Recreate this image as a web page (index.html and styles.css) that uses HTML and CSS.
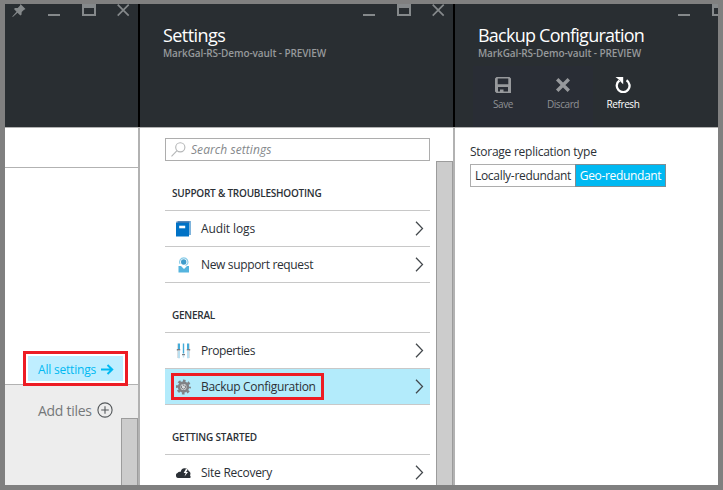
FILE: index.html
```
<!DOCTYPE html>
<html lang="en">
<head>
<meta charset="utf-8">
<title>Backup Configuration</title>
<link rel="stylesheet" href="styles.css">
</head>
<body>
<svg class="defs" width="0" height="0">
  <symbol id="controls" viewBox="0 0 82 13">
    <path d="M0 10h12v2H0z"/>
    <path fill-rule="evenodd" d="M34 0h14v12H34zM36 4v6h10V4z"/>
    <path d="M69.700 .7l11 11M80.700 .7l-11 11" fill="none" stroke="#85898b" stroke-width="1.700"/>
  </symbol>
  <symbol id="chevron" viewBox="0 0 9 15">
    <path d="M1 .8L7.500 7.500 1 14.200" fill="none" stroke="#43484c" stroke-width="1.250"/>
  </symbol>
</svg>
<div class="desktop">
  <section class="blade overview">
    <header class="head">
      <svg class="pin" viewBox="0 0 14 14"><path d="M8.500 0L13.500 5 11.800 5.900 9.700 8.100 9.500 10.700 8.300 11.500 5.500 8.700.8 13 .3 12.500 4.500 7.700 2 5.100 3 4.100 5.700 4 7.900 1.800z"/></svg>
      <svg class="controls"><use href="#controls"/></svg>
    </header>
    <div class="strip"></div>
    <div class="lens">
      <a class="all-settings"><span class="t-all">All settings</span>
        <svg width="13" height="11" viewBox="0 0 13 11"><path d="M0 5.500h11M6.500 1l4.700 4.500L6.500 10" fill="none" stroke="#00b9f2" stroke-width="2"/></svg>
      </a>
    </div>
    <div class="tiles">
      <div class="add"><span class="t-add">Add tiles</span>
        <svg width="16" height="16" viewBox="0 0 16 16"><g fill="none" stroke="#55595c" stroke-width="1.100"><circle cx="8" cy="8" r="7.100"/><path d="M8 4.200v7.600M4.200 8h7.600"/></g></svg>
      </div>
      <div class="scroll"></div>
    </div>
  </section>

  <section class="blade settings">
    <header class="head">
      <svg class="controls"><use href="#controls"/></svg>
      <h1 class="t-settings">Settings</h1>
      <p class="sub">MarkGal-RS-Demo-vault - PREVIEW</p>
    </header>
    <div class="content">
      <div class="list">
        <div class="search">
          <svg width="15" height="15" viewBox="0 0 15 15"><g fill="none" stroke="#b4b6b7" stroke-width="1.100"><circle cx="9.300" cy="5.300" r="4.600"/><path d="M6 8.700L.5 14.300"/></g></svg>
          <span>Search settings</span>
        </div>
        <h2 class="t-support">SUPPORT &amp; TROUBLESHOOTING</h2>
        <div class="row">
          <svg class="icon" viewBox="0 0 16 16"><path d="M2 0h13v14H2z" fill="#7fb4dc"/><path d="M0 1.500h13V15.500H0z" fill="#0072c6"/><path d="M.5 1h13" stroke="#2d5f9b"/><path d="M3.200 4.700h6v2.600h-6z" fill="#fff"/></svg>
          <span class="t-audit">Audit logs</span><svg class="chev"><use href="#chevron"/></svg>
        </div>
        <div class="row">
          <svg class="icon" viewBox="0 0 16 16"><path d="M2.500 9h2.500l3 3 3-3h2V15.500H2.500z" fill="#55b4de"/><circle cx="7.700" cy="5" r="2.700" fill="#3f9ccb"/><path d="M4 7A4.200 4.200 0 1 1 11.500 7L9.500 8.500" fill="none" stroke="#8acde9" stroke-width="1.100"/></svg>
          <span class="t-request">New support request</span><svg class="chev"><use href="#chevron"/></svg>
        </div>
        <h2 class="t-general">GENERAL</h2>
        <div class="row">
          <svg class="icon" viewBox="0 0 16 16"><path d="M2 .5h2v5.500H2zM11 .5h2v5.500h-2zM6.800 .5h1.400v10H6.800z" fill="#44acd9"/><path d="M2 8h2v7.300H2zM11 8h2v7.300h-2zM6.800 12.500h1.400v2H6.800z" fill="#b9dff0"/><path d="M1 .5h1v14.500H1zM13 .5h1v14.500h-1z" fill="#dce0e2"/><path d="M.8 6h3.400v1.500H.8zM10.800 6h3.400v1.500h-3.400zM6 11h3v1.200H6z" fill="#778087"/></svg>
          <span class="t-prop">Properties</span><svg class="chev"><use href="#chevron"/></svg>
        </div>
        <div class="row selected">
          <svg class="icon" viewBox="0 0 16 16"><circle cx="7.500" cy="8" r="6.300" fill="none" stroke="#808285" stroke-width="2.400" stroke-dasharray="2.600 2.348" stroke-dashoffset="1.300"/><circle cx="7.500" cy="8" r="4.400" fill="#d9dcdd" stroke="#808285" stroke-width="2.600"/><path d="M5.800 6.500A2.200 2.200 0 1 0 9.300 6.600M7 5.300l1.300 2" fill="none" stroke="#77797c" stroke-width="1"/></svg>
          <span class="t-backup">Backup Configuration</span><svg class="chev"><use href="#chevron"/></svg>
          <i class="callout"></i>
        </div>
        <h2 class="t-started">GETTING STARTED</h2>
        <div class="row">
          <svg class="icon" viewBox="0 0 16 16"><path d="M2.500 13A2.600 2.600 0 0 1 1.500 8 3 3 0 0 1 4.700 6.800 4.200 4.200 0 0 1 8.500 3.200 4.200 4.200 0 0 1 12.700 6 3 3 0 0 1 14 10.300 2.500 2.500 0 0 1 14.300 13z" fill="#2b3036"/><path d="M10 3.700L7.700 8h2l-1.200 3.400 3.500-4.400h-2l1.800-2.600z" fill="#fff"/></svg>
          <span class="t-site">Site Recovery</span><svg class="chev"><use href="#chevron"/></svg>
        </div>
      </div>
      <div class="scroll"></div>
    </div>
  </section>

  <section class="blade backup">
    <header class="head">
      <svg class="controls"><use href="#controls"/></svg>
      <h1 class="t-title">Backup Configuration</h1>
      <p class="sub">MarkGal-RS-Demo-vault - PREVIEW</p>
      <div class="commands">
        <div class="cmd off"><svg width="16" height="16" viewBox="0 0 16 16"><path fill="#97999c" fill-rule="evenodd" d="M1.500 0h13L16 1.500V16H1.500L0 14.500V1.500zM2.700 1.600V7.300h10.600V1.600zM3 10V14.500h2V12.500h3.500v2h4.500V10z"/><path d="M5 13h3v3H5z" fill="#97999c"/></svg><span>Save</span></div>
        <div class="cmd off"><svg width="16" height="16" viewBox="0 0 16 16"><path d="M2.200 2.200l11.600 11.600M13.800 2.200L2.200 13.800" stroke="#97999c" stroke-width="3.400"/></svg><span>Discard</span></div>
        <div class="cmd"><svg width="16" height="16" viewBox="0 0 16 16"><path d="M4.500 3.500A6.400 6.400 0 1 0 11.500 3.300" fill="none" stroke="#fff" stroke-width="2.300"/><path d="M.5 0h7.700v7.300L5.600 4.700 5 3.500z" fill="#fff"/></svg><span>Refresh</span></div>
      </div>
    </header>
    <div class="form">
      <label>Storage replication type</label>
      <div class="options"><span class="opt local">Locally-redundant</span><span class="opt geo">Geo-redundant</span></div>
    </div>
  </section>
</div>
</body>
</html>
```
FILE: styles.css
```
* { box-sizing: border-box; }
html, body { height: 100%; }
body {
  margin: 0;
  padding: 4px 5px 5px;
  background: #808080;
  font: 12px/16px "Open Sans", "Noto Sans", sans-serif;
  color: #2b3036;
  overflow: hidden;
}
svg { display: block; flex: none; }
h1, h2, p { margin: 0; }
.defs { position: absolute; }
.desktop { display: flex; height: 481px; }
.blade { display: flex; flex-direction: column; background: #fff; overflow: hidden; }
.overview { width: 133px; }
.settings { width: 315px; }
.backup { width: 265px; }
.head {
  position: relative;
  flex: none;
  height: 124px;
  background: linear-gradient(#292e32, #292e32) padding-box;
  border-bottom: 1px solid #b2b2b2;
}
.settings .head::before, .backup .head::before { content: ""; position: absolute; left: 0; top: 0; width: 2px; height: 123px; background: #000; }
.content, .form { border-left: 2px solid #b2b2b2; }
.controls { position: absolute; top: 0; left: 43px; width: 82px; height: 13px; fill: #85898b; }
.settings .controls, .backup .controls { left: 225px; }
.pin { position: absolute; left: 7px; top: 0; width: 14px; height: 14px; fill: #85898b; }

h1 { padding: 19px 0 0 25px; font-size: 18px; line-height: 24px; font-weight: 400; color: #fff; white-space: nowrap; }
.sub { padding-left: 25px; font-size: 10px; line-height: 13px; font-weight: 600; letter-spacing: -.1px; color: #96999b; white-space: nowrap; }
.t-settings { letter-spacing: -.57px; }
.t-title { letter-spacing: -.76px; }

.strip { height: 40px; border-bottom: 1px solid #b2b2b2; }
.lens { flex: none; height: 217px; padding: 183px 0 0 18px; border-bottom: 1px solid #b2b2b2; }
.all-settings {
  position: relative;
  display: flex;
  align-items: center;
  gap: 5px;
  width: 105px;
  height: 35px;
  padding: 2px 5px 0 12px;
  border: 3px solid #ed1c24;
  background: #bfeeff;
  box-shadow: inset 0 0 0 2px #fff;
  color: #00b9f2;
}
.t-all { letter-spacing: -.2px; white-space: nowrap; }
.tiles { flex: 1; display: flex; justify-content: space-between; background: #ededed; }
.add { display: flex; gap: 5px; height: 16px; margin: 17px 0 0 33px; font-size: 14px; line-height: 17px; color: #75787a; white-space: nowrap; }
.t-add { letter-spacing: -.28px; }
.scroll { width: 17px; margin-top: 33px; background: #ccc; border: solid #9c9c9c; border-width: 1px 1px 0; }

.content { flex: 1; display: flex; justify-content: space-between; padding-left: 25px; }
.list { width: 265px; }
.search {
  display: flex;
  gap: 5px;
  height: 23px;
  margin-top: 10px;
  padding: 3px 0 0 5px;
  border: 1px solid #adadad;
  font-style: italic;
  letter-spacing: .07px;
  color: #85888b;
}
h2 { height: 50px; padding: 25px 0 0 7px; border-bottom: 1px solid #c8c8c8; font-size: 10px; line-height: 14px; font-weight: 600; }
.t-support { letter-spacing: -.23px; }
.t-general { letter-spacing: -.24px; }
.t-started { letter-spacing: -.17px; }
.row {
  position: relative;
  display: flex;
  align-items: center;
  height: 36px;
  padding: 0 6px 0 11px;
  border-bottom: 1px solid #c8c8c8;
}
.row span { flex: 1; margin-left: 9px; white-space: nowrap; }
.icon { width: 16px; height: 16px; }
.chev { width: 9px; height: 15px; }
.selected { background: #b3ebfb; }
.callout { position: absolute; left: 6px; top: 4px; width: 153px; height: 27px; border: 3px solid #ed1c24; }
.t-audit { letter-spacing: -.12px; }
.t-request { letter-spacing: -.34px; }
.t-prop { letter-spacing: -.41px; }
.t-backup { letter-spacing: -.31px; }
.t-site { letter-spacing: -.27px; }

.commands { display: flex; height: 61px; margin: 6px 0 0 20px; }
.cmd { display: flex; flex-direction: column; align-items: center; gap: 4px; width: 60px; padding-top: 11px; font-size: 10px; line-height: 14px; letter-spacing: -.42px; color: #fff; }
.off { background: #292d35; color: #8f9194; }
.form { flex: 1; padding: 16px 0 0 15px; }
label { display: block; letter-spacing: -.26px; }
.options { display: flex; margin-top: 4px; }
.opt { height: 23px; border: 1px solid #adadad; line-height: 21px; text-align: center; white-space: nowrap; }
.local { width: 105px; border-right: 0; letter-spacing: -.3px; }
.geo { width: 91px; background: #00b9f2; border-color: #7f8d93; color: #fff; letter-spacing: -.34px; }
```
